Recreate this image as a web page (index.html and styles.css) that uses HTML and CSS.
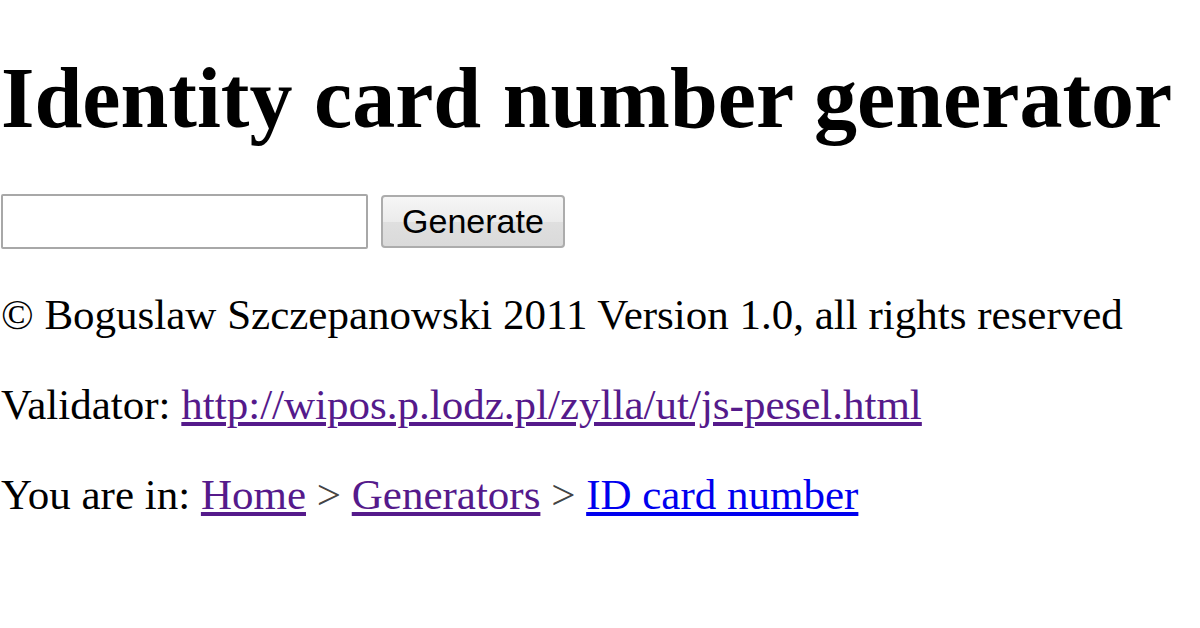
FILE: index.html
```html
<!DOCTYPE html>
<html>
<head>
<meta charset="utf-8">
<title>Identity card number generator</title>
<link rel="stylesheet" href="styles.css">
</head>
<body>
<h1 class="title">Identity card number generator</h1>
<form class="gen-form">
<input class="gen-input" type="text">
<button class="gen-button" type="button">Generate</button>
</form>
<p class="line">© Boguslaw Szczepanowski 2011 Version 1.0, all rights reserved</p>
<p class="line">Validator: <a class="visited" href="#">http://wipos.p.lodz.pl/zylla/ut/js-pesel.html</a></p>
<p class="line">You are in: <a class="visited" href="#">Home</a> <span class="sep">&gt;</span> <a class="visited" href="#">Generators</a> <span class="sep">&gt;</span> <a class="current" href="#">ID card number</a></p>
</body>
</html>
```
FILE: styles.css
```css
html, body {
  margin: 0;
  padding: 0;
  background: #fff;
}
body {
  font-family: "Liberation Serif", "Times New Roman", serif;
  font-size: 43px;
  color: #000;
  padding-left: 1px;
}
.title {
  font-size: 86px;
  font-weight: bold;
  margin: 55px 0 0 0;
  line-height: 86px;
}
.gen-form {
  display: flex;
  gap: 13px;
  margin-top: 53px;
  align-items: center;
}
.gen-input {
  width: 367px;
  height: 55px;
  box-sizing: border-box;
  border: 2px solid #a8a8a8;
  border-radius: 2px;
  margin: 0;
  background: #fff;
}
.gen-button {
  width: 184px;
  height: 53px;
  box-sizing: border-box;
  border: 2px solid #acacac;
  border-radius: 4px;
  background: linear-gradient(#f6f6f6, #ebebeb 50%, #dfdfdf 51%, #dadada);
  font-family: "Liberation Sans", Arial, sans-serif;
  font-size: 34px;
  color: #000;
  padding: 0;
  margin: 0;
}
.line {
  margin: 42px 0 0 0;
  line-height: 48px;
}
.line + .line {
  margin-top: 42px;
}
a {
  text-decoration: underline;
}
a.visited {
  color: #551a8b;
}
a.current {
  color: #0000ee;
}
.sep {
  color: #444;
}
```
